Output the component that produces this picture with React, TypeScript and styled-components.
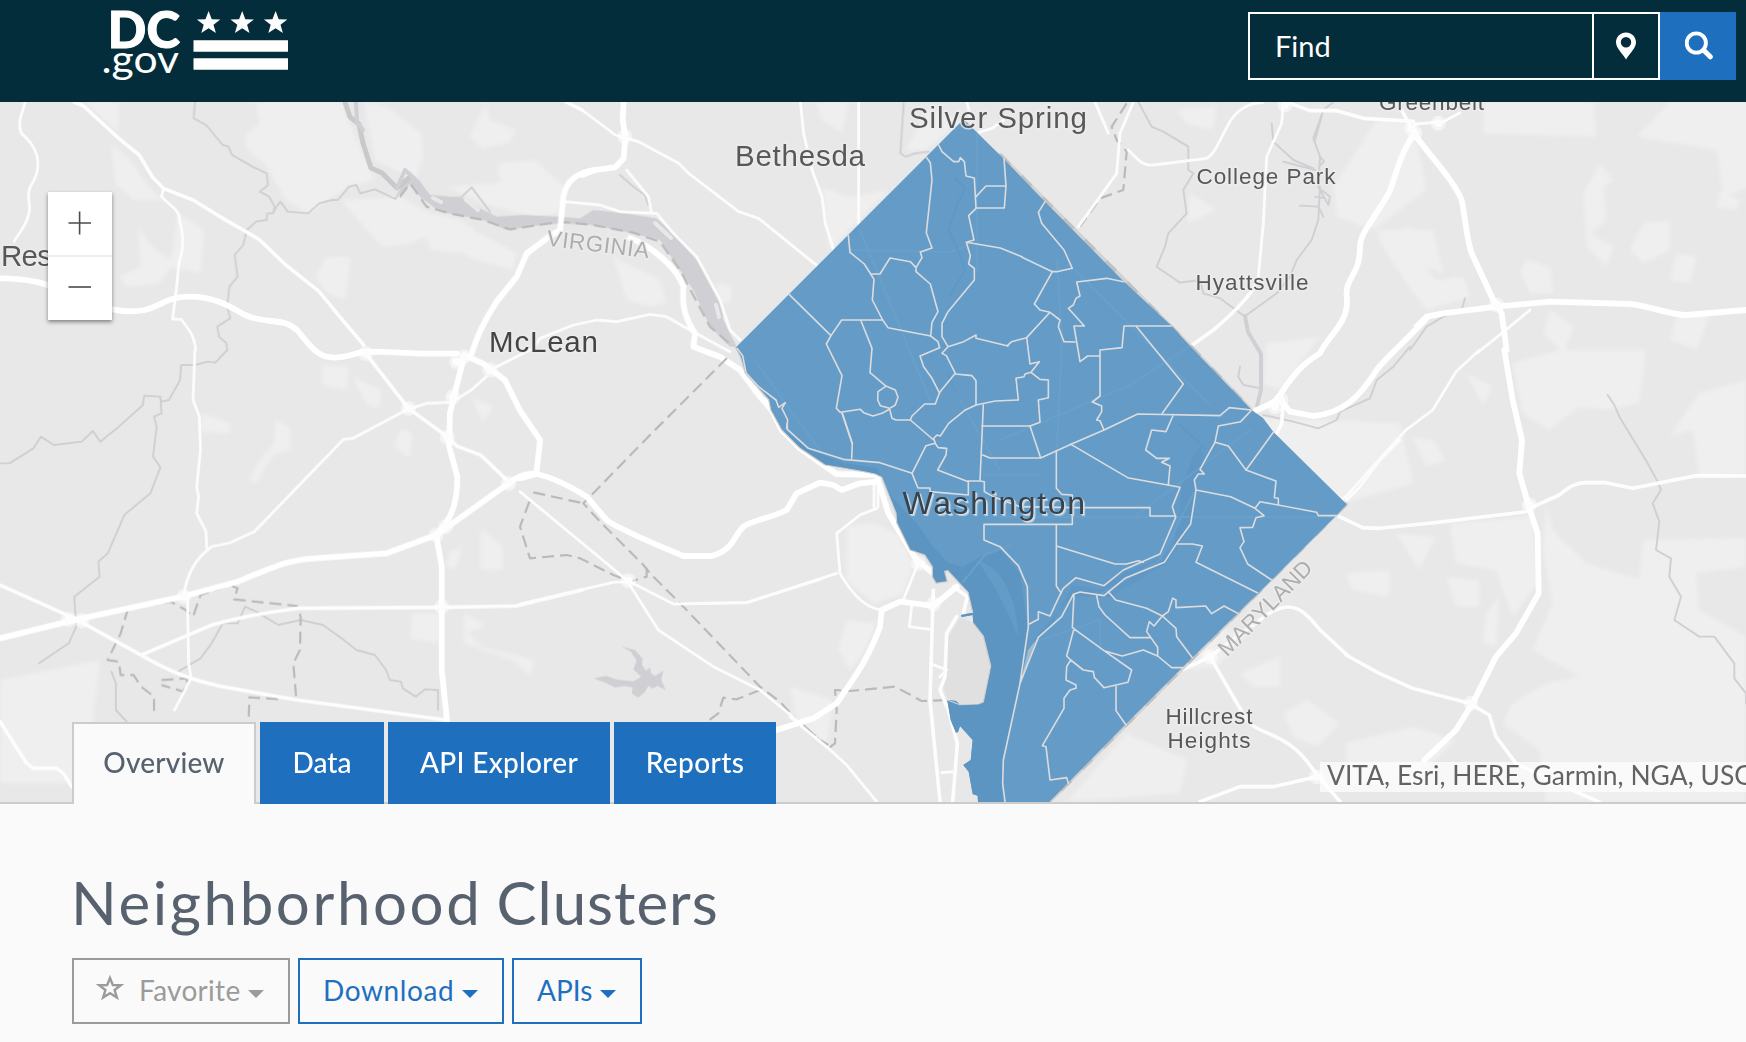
import React from "react";
import styled, { createGlobalStyle, css } from "styled-components";

const GlobalStyle = createGlobalStyle`
  *, *::before, *::after { box-sizing: border-box; }
  body {
    margin: 0;
    background: #fafafa;
    color: #58626f;
    font-family: Lato, "Open Sans", sans-serif;
    overflow: hidden;
  }
  button { font-family: inherit; }
`;

const Page = styled.div`
  display: flex;
  flex-direction: column;
  width: 100%;
  height: 1042px;
  overflow: hidden;
`;

/* ---------- header ---------- */

const Header = styled.header`
  display: flex;
  justify-content: space-between;
  flex: none;
  height: 102px;
  padding: 0 10px 0 100px;
  background: #032d3a;
`;

const Logo = styled.svg`
  display: block;
  width: 200px;
  height: 90px;
  overflow: visible;
`;

const SearchBar = styled.div`
  display: flex;
  width: 488px;
  height: 68px;
  margin-top: 12px;
`;

const SearchFields = styled.div`
  display: flex;
  flex: 1;
  border: 2px solid #fff;
`;

const SearchInput = styled.div`
  flex: 1;
  padding: 0 0 0 25px;
  color: #fff;
  font-size: 29px;
  line-height: 63px;
`;

const LocateButton = styled.button`
  display: flex;
  align-items: center;
  justify-content: center;
  width: 66px;
  padding: 0;
  border: 0;
  border-left: 2px solid #fff;
  background: transparent;
`;

const SearchButton = styled.button`
  display: flex;
  align-items: center;
  justify-content: center;
  width: 76px;
  padding: 0 0 0 2px;
  border: 0;
  background: #1e70bf;
`;

/* ---------- map ---------- */

const MapPanel = styled.section`
  position: relative;
  display: flex;
  flex-direction: column;
  justify-content: space-between;
  flex: none;
  height: 702px;
  border-bottom: 2px solid #ccc;
`;

const MapCanvas = styled.svg`
  position: absolute;
  inset: 0;
  width: 1746px;
  height: 700px;
`;

const ZoomControl = styled.div`
  position: relative;
  display: flex;
  flex-direction: column;
  width: 64px;
  margin: 90px 0 0 48px;
  background: #fff;
  box-shadow: 0 2px 4px rgba(0, 0, 0, 0.45);
`;

const ZoomButton = styled.button`
  height: 65px;
  padding: 0 1px 4px 0;
  border: 0;
  background: transparent;

  &:first-child {
    height: 63px;
    padding-bottom: 2px;
  }

  & + & { border-top: 2px solid #efefef; }

  svg { display: block; margin: 0 auto; }
`;

const Attribution = styled.div`
  position: absolute;
  top: 660px;
  left: 1320px;
  right: 0;
  height: 30px;
  padding-left: 7px;
  overflow: hidden;
  background: rgba(255, 255, 255, 0.68);
  color: #636363;
  font-size: 26.4px;
  line-height: 26px;
  letter-spacing: 0.05px;
  white-space: nowrap;
`;

const TabList = styled.nav`
  position: relative;
  display: flex;
  gap: 4px;
  height: 82px;
  margin: 0 0 -2px 72px;
`;

const Tab = styled.button<{ $width: number; $spacing: number; $active?: boolean }>`
  width: ${(p) => p.$width}px;
  padding: 0 0 2px;
  border: 0;
  background: #1e70bf;
  color: #fff;
  font-size: 28px;
  font-weight: 500;
  line-height: 80px;
  letter-spacing: ${(p) => p.$spacing}px;
  text-align: center;
  white-space: nowrap;

  ${(p) =>
    p.$active &&
    css`
      padding: 0 0 4px;
      border: 2px solid #ccc;
      border-bottom: 0;
      background: #fafafa;
      color: #58626f;
      line-height: 76px;
    `}
`;

/* ---------- dataset ---------- */

const Dataset = styled.main`
  flex: 1;
  padding: 62px 72px 0;
`;

const Title = styled.h1`
  margin: 0 0 0 -1px;
  color: #58626f;
  font-size: 60px;
  font-weight: 400;
  line-height: 72px;
  letter-spacing: 2.6px;
  word-spacing: -4px;
  white-space: nowrap;
`;

const TitleEnd = styled.span`
  letter-spacing: 1px;
`;

const Actions = styled.div`
  display: flex;
  gap: 8px;
  margin-top: 20px;
`;

const ActionButton = styled.button<{ $width: number; $muted?: boolean; $spacing: number }>`
  display: flex;
  align-items: center;
  justify-content: space-between;
  width: ${(p) => p.$width}px;
  height: 66px;
  padding: 0 24px 3px 23px;
  border: 2px solid currentColor;
  background: transparent;
  color: ${(p) => (p.$muted ? "#9b9b9b" : "#1e70bf")};
  font-size: 28px;
  letter-spacing: ${(p) => p.$spacing}px;
  white-space: nowrap;
`;

const Caret = styled.span`
  margin-top: 8px;
  border: 8px solid transparent;
  border-top-color: currentColor;
  border-bottom: 0;
`;

/* ---------- basemap data ---------- */

type Sheet = {
  transform: string;
  patches?: string;
  water?: string;
  streams?: string;
  thin?: string;
  mid?: string;
  wide?: string;
  nodes?: string;
  dashes?: string;
};

const sheets: Sheet[] = [
  {
    transform: "scale(.3712 .33333)",
    patches:
      "M230,306 L320,306 320,400 Z M690,306 L920,306 980,470 1010,540 940,560 830,640 770,600 720,500 660,440 665,400 700,370 Z M980,306 L1040,320 1135,400 1140,470 1120,540 1010,480 Z M300,430 L350,480 400,560 440,600 360,600 310,550 Z M920,600 L1080,590 1160,640 1240,660 1280,690 1280,760 1210,740 1140,710 1110,730 1030,740 980,680 Z M1310,310 L1320,360 1390,390 1370,430 1300,445 1265,410 Z M880,770 L945,770 930,900 880,880 850,830 Z M370,680 L410,740 460,780 480,640 550,690 540,820 460,800 430,850 340,860 320,830 380,800 Z M1340,490 L1440,480 1520,560 1510,640 1440,650 1330,620 1200,560 1350,550 Z",
    streams:
      "M525,306 L522,355 555,375 600,435 615,440 625,465 680,500 718,520 722,555 700,575 725,590 740,620 735,640 720,640 718,660 690,665 665,690 655,735 632,765 640,830 618,860 612,920 620,955 585,980 590,1010 610,1030 612,1050 M735,640 L745,620 755,605 775,635 830,640 860,610 895,600 910,600 940,560 960,555 970,580 1010,568 1065,597 1085,560",
    thin:
      "M68,306 C60,340 45,370 58,400 C100,440 115,490 90,545 C65,580 85,610 78,640 C70,680 50,700 38,725 M440,570 L435,590 C460,620 485,630 483,660 C500,720 490,760 482,790 L475,870 465,957 488,958 C510,990 525,1010 527,1050",
    mid:
      "M200,306 L225,318 320,415 375,465 410,530 440,565 520,600 600,655 660,693 700,720 770,795 860,875 915,950 980,1035 M1525,306 L1568,330",
    wide:
      "M0,835 C80,835 130,850 180,880 C300,935 340,940 390,930 C440,915 450,890 510,890 C580,890 620,920 660,945 C720,975 760,950 800,990 C830,1030 850,1062 880,1070 C920,1080 950,1060 985,1055 C1080,1055 1150,1065 1230,1060",
  },
  {
    transform: "translate(0 350) scale(.3712 .33333)",
    patches:
      "M0,990 L270,930 230,1300 0,1300 Z M865,45 L940,50 935,120 870,105 Z M950,80 L1030,120 1020,175 985,160 Z M540,190 L620,220 620,250 540,245 Z M740,210 L780,230 785,300 735,315 690,400 670,390 700,330 740,280 Z M1080,235 L1110,250 1105,325 1060,290 Z M1295,535 L1355,590 1355,660 1295,660 Z M1245,585 L1230,655 1200,655 1210,610 Z M1110,790 L1185,790 1185,880 1105,865 Z M1250,790 L1310,825 1260,850 1300,890 1440,930 1430,980 1380,930 1250,880 Z M1270,140 L1330,170 1300,215 Z",
    streams:
      "M0,340 L25,340 90,295 110,260 145,285 220,275 250,243 270,275 320,230 385,165 388,137 430,140 435,155 455,150 485,90 488,45 525,45 560,35 580,38 612,0 M432,140 L435,190 415,200 422,230 412,320 432,352 405,430 345,485 335,495 290,610 265,635 268,680 200,740 205,830 185,880 105,940 M480,965 L540,925 570,880 600,820 640,820 660,770 690,785 750,825 810,810 870,825 920,865 960,900 1010,915 1040,960 1050,990 1080,995 1085,1015 1120,1040 1145,1018 1180,1020 1180,1080 M300,965 L312,1000 312,1080 345,1120",
    thin:
      "M525,0 L520,150 537,200 540,300 530,410 535,440 530,490 555,545 557,595 M505,740 L508,940 515,985 470,1080 M495,740 C500,690 520,630 570,590 L620,578 685,545 925,268 950,265 1100,177 1150,160 1215,157 1270,120 1310,80",
    mid:
      "M985,10 L1100,175 1205,260 1230,288 1295,315 1370,395 M0,705 L200,805 380,915 C450,960 510,990 600,1010 L800,1050 1000,1080 1200,1110 M380,915 L570,825 C650,800 730,785 800,775 L1190,772 1390,768 1568,720",
    wide:
      "M1250,20 L1225,130 1212,190 1210,290 1232,380 C1232,440 1225,500 1175,555 L1190,650 1190,960 1205,1120 M0,865 L200,810 490,740 640,695 C760,640 780,630 850,625 L1040,610 1175,555 1370,400 C1400,375 1420,370 1445,370 M1445,370 L1455,270 1400,180 1360,90 1300,40 1250,15",
    nodes:
      "M1250,20 h.1 M1230,35 h.1 M1320,60 h.1 M1220,140 h.1 M1100,175 h.1 M1205,262 h.1 M1370,400 h.1 M1175,555 h.1 M1200,530 h.1 M1190,770 h.1 M495,740 h.1 M185,808 h.1 M220,812 h.1 M985,10 h.1",
    dashes:
      "M345,775 L460,755 500,780 520,800 540,735 620,705 640,715 630,748 800,768 810,800 808,900 790,940 798,1045 M345,775 L325,850 290,930 320,935 325,975 360,975 380,1010 415,1040 415,1100 M435,990 L505,985 495,1025 435,1005 M670,1100 L672,1042 760,1048",
  },
  {
    transform: "translate(400 170) scale(.33333)",
    patches:
      "M290,0 L460,60 450,90 340,80 Z M640,260 L780,330 800,400 750,410 680,390 Z M950,340 L995,350 990,400 950,400 Z M80,180 L240,190 350,250 340,300 230,270 190,250 90,240 Z",
    water:
      "M0,60 L30,5 60,35 90,75 150,80 180,80 230,110 290,140 370,135 480,140 540,145 580,120 680,130 770,145 830,200 890,270 930,340 965,400 970,450 1010,530 990,530 930,470 880,360 840,300 780,210 700,190 580,165 480,160 400,168 320,180 250,150 200,140 120,125 60,80 30,40 0,85 Z",
    streams: "M170,95 L215,52 270,125 M660,15 L700,50 735,75 745,105",
    thin:
      "M495,95 L600,105 660,125 770,130 820,190 890,260 960,390 990,480 1020,510 M680,0 L745,80 755,130 M270,600 L400,535 420,505 520,465 590,450 650,455 750,433 800,440 870,480 990,545",
    wide:
      "M215,550 C230,500 260,440 290,395 L350,320 380,250 440,205 480,180 490,80 C500,30 530,10 580,0 M690,205 C750,225 830,290 850,350 C845,420 860,450 885,490 L880,530 960,560 1020,600 1080,680 1115,720",
    dashes: "M0,80 L30,40 80,110 150,130 250,150 330,178 480,155 580,165 700,188 780,215 840,300 930,470 1000,530",
  },
  {
    transform: "translate(582 90) scale(.33333)",
    patches:
      "M700,36 L800,36 780,130 720,90 Z M1040,60 L1140,90 1030,180 970,180 Z M720,290 L800,320 920,300 740,480 Z",
    streams: "M965,40 L955,190 970,200 1000,190 1040,185",
    thin:
      "M0,60 L100,135 170,155 290,220 320,250 470,365 530,385 690,515 710,530 M655,36 L665,130 690,240 720,320 730,400 755,480 M830,36 L830,400 M1180,130 L1230,115 1265,90 M1155,36 L1165,80",
    wide: "M0,255 L40,240 100,232 125,205 130,140 122,90 125,36",
    nodes: "M128,140 h.1",
  },
  {
    transform: "translate(520 430) scale(.33333)",
    water:
      "M305,650 L345,660 368,686 366,705 378,722 390,712 393,730 405,738 430,722 424,750 437,780 412,768 398,776 385,768 375,785 355,803 335,790 338,772 312,768 285,772 262,760 222,745 258,738 290,748 340,754 364,740 340,718 350,692 332,664 Z",
    thin: "M0,185 L320,450 415,600 580,710 720,780 830,870 M0,522 L280,457 330,455 460,522 680,518 900,448",
    wide:
      "M0,145 L50,132 C110,145 160,175 200,200 L260,270 C300,300 400,340 490,378 L575,378 C640,360 640,320 670,290 C700,270 750,265 800,240 L830,190 900,158",
    nodes: "M325,452 h.1",
    dashes:
      "M621,-216 L395,10 190,220 240,275 370,405 395,435 490,530 720,770 780,815 830,870 900,930 925,945 M40,187 L190,220 M28,215 L0,290 30,385 140,375 180,385 280,435 330,455 380,440 380,405 M720,780 L650,808 610,803 595,850 555,880",
  },
  {
    transform: "translate(700 400) scale(.33333)",
    patches:
      "M440,380 L520,368 590,400 640,490 610,580 520,610 440,540 Z M440,660 L530,670 490,760 450,810 415,750 Z M270,860 L400,900 380,1040 290,960 Z",
    thin:
      "M530,325 L480,345 410,400 420,520 C460,590 500,625 545,630 M650,500 L610,600 M690,790 L740,810 720,830 M635,620 L628,680 690,688 M725,1118 L765,1115 M522,250 L522,320 M534,250 L534,320 M0,610 L140,608 410,520 M270,950 L385,1045 440,1095 530,1205",
    mid:
      "M700,570 L690,900 720,1205 M770,650 L740,700 735,830 720,870 745,930 772,1030 765,1120 758,1205 M760,560 L802,590 790,640",
    wide:
      "M200,0 L245,90 300,145 370,195 410,222 530,225 565,340 650,480 700,520 M360,248 L400,255 425,270 480,250 530,245 M545,630 L600,605 700,618 770,560 M545,630 L540,680 C500,790 450,850 410,910 L340,955 230,990 130,1010",
    nodes: "M655,490 h.1 M700,612 h.1",
    dashes: "M310,975 L385,1045 405,1030 410,930 405,870 450,873 585,860 665,903 740,900",
  },
  {
    transform: "translate(1000 90) scale(.33333)",
    patches:
      "M530,60 L650,50 640,120 560,100 Z M1130,90 L1240,100 1280,300 1120,420 1010,380 1000,290 Z M570,310 L650,360 560,400 Z M800,760 L960,740 900,820 840,900 790,880 Z M1130,420 L1300,420 1330,550 1200,500 Z M760,980 L1200,1000 1240,1180 1030,1240 850,1080 Z",
    streams:
      "M415,36 L455,110 490,125 565,170 565,240 580,250 550,300 560,370 505,430 495,470 470,530 540,578 600,570 610,610 660,625 735,680 M720,830 L715,860 730,885 785,895 M965,75 L940,145 960,200 955,290 985,345 M960,290 L955,390 935,450 890,510 870,560 830,610 740,675 M815,100 L820,155 880,210 940,235 M850,215 L945,240 M900,347 L955,350 970,380 M960,200 L972,215 962,225 M965,300 L990,320 985,345 M945,320 L975,325 M790,975 L880,995 955,1015 1010,990 1020,965 1110,925 1130,870 1180,830 1230,770",
    thin:
      "M285,36 L325,130 M400,36 L360,130 350,250 300,320 235,410 M385,180 C420,215 430,228 460,225 L620,205 C650,190 670,120 700,80 C730,45 760,40 790,36 M850,36 L845,100 800,200 790,400 775,560",
    mid: "M775,560 C770,600 700,670 640,720 L570,770 M870,40 L930,62 1010,62 1090,85 1240,94 M850,930 L845,1000 830,1030",
    wide:
      "M1245,130 C1190,200 1180,300 1160,320 C1120,390 1080,430 1080,470 C1080,560 1035,560 1040,620 C1050,700 980,740 960,790 C910,820 880,850 830,930 C800,950 780,955 760,965 M840,930 L870,965 940,978 C1030,970 1080,920 1130,840 C1160,800 1210,760 1280,685",
    nodes: "M843,930 h.1 M855,45 h.1 M825,950 h.1",
    dashes: "M380,40 L335,110 350,150 380,185 370,300 300,325 240,410",
  },
  {
    transform: "translate(1230 0) scale(.33333)",
    patches:
      "M760,306 L1090,306 1100,410 920,405 760,400 Z M1320,306 L1560,306 1560,560 1480,590 1460,450 1220,410 Z M1110,490 L1150,540 1120,560 1130,660 1080,700 1150,740 1130,800 1070,740 1060,580 Z M1240,670 L1320,660 1320,750 1240,790 1200,750 Z M890,780 L960,800 970,880 900,880 870,810 Z M440,710 L540,680 580,720 580,800 620,840 700,830 720,890 590,930 530,850 Z M1340,760 L1400,770 1380,850 1320,840 Z M1340,950 L1440,940 1400,1050 1320,1020 Z M960,930 L1030,980 1000,1060 940,1000 Z M1470,570 L1530,600 1520,630 1460,620 Z",
    streams: "M705,895 L695,930 640,950 590,980 540,1050 M310,306 L280,330 255,420",
    thin: "M900,930 L815,1000 740,1060 M690,338 L640,365 555,372",
    mid: "M515,330 L555,405",
    wide:
      "M555,405 C610,480 670,540 695,600 C710,680 710,720 725,760 L790,900 815,940 830,1050 M560,980 L590,950 640,940 800,920 960,905 1200,912 C1270,920 1320,945 1370,945 L1548,930",
    nodes: "M555,400 h.1 M545,385 h.1 M800,915 h.1 M625,370 h.1",
  },
  {
    transform: "translate(1346 350) scale(.33333)",
    patches:
      "M500,40 L640,0 900,0 880,160 780,180 700,170 610,240 530,190 Z M1060,130 L1200,90 1200,380 1060,380 1040,240 970,260 Z M600,460 L620,540 720,640 890,690 780,740 620,760 590,600 Z M310,520 L560,500 575,700 500,800 450,660 330,640 Z M890,570 L1200,565 1200,650 1050,670 1060,780 1200,860 1200,1356 600,1356 580,1200 470,1120 500,1060 600,1000 700,980 560,900 620,760 880,690 Z M150,550 L270,560 220,660 Z M300,680 L400,690 400,770 330,770 Z M0,670 L130,660 130,740 20,720 Z M0,210 L90,220 130,280 60,370 0,390 Z M360,70 L440,110 410,165 Z M200,260 L260,270 300,330 240,350 Z M0,1180 L200,1130 330,1170 200,1300 0,1300 Z M420,790 L460,740 450,890 410,880 Z",
    streams:
      "M785,135 L805,165 820,200 905,340 935,395 945,420 920,460 940,515 930,600 975,625 970,680 1005,740 985,810 1060,860 1105,860 1165,940 1165,985 1200,1030 1200,1060",
    thin: "M400,0 L330,65 260,180 180,240 80,350 0,440 -30,458",
    mid:
      "M-20,500 L50,533 100,535 250,520 540,485 M550,475 L640,435 C670,410 690,398 720,398 L780,398 860,415 1050,377 1200,378 M0,915 L100,970 200,1015 370,1060 430,1095 450,1160 510,1240 700,1330 760,1356",
    wide: "M475,0 L500,150 528,270 520,370 550,475 575,550 578,730 510,850 450,920 380,1060 330,1140 235,1230",
    nodes: "M550,465 h.1 M375,1060 h.1",
  },
  {
    transform: "translate(1000 400) scale(.33333)",
    patches:
      "M380,1000 L560,1080 540,1180 200,1205 Z M850,940 L920,900 1020,970 950,1040 880,1010 Z M720,820 L840,770 840,860 760,860 Z M620,680 L740,700 650,800 560,810 Z",
    thin: "M1040,300 L1080,260 1140,180 1200,120",
    mid: "M550,808 L630,770 800,645 C880,590 920,640 960,690 L1045,768 M630,770 L740,960 C780,1010 860,990 940,1110 L1020,1205 M600,1205 L720,1160 820,1160 950,1130",
    nodes: "M950,1130 h.1 M630,770 h.1",
  },
  {
    transform: "translate(0 690) scale(.33333)",
    mid: "M0,95 L80,220 100,235 170,235 190,250 215,290 240,300",
  },
];

const districtOutline =
  "M963.7,119.3 L1000,155 1045,201.7 1123,280.7 1171.7,326 1190,346 1251.7,410 1263,418 1273.5,432 1346.7,504.3 1336.7,515 1271.7,580 1191.7,658.3 1125,725 1049.3,802 978,802 977.7,795.7 972.7,794 968.7,771.7 963.3,765 970.7,760 972.7,740 960,726 958,732 956,732.7 950.7,720 947.3,700 956,701 960,704.7 978.3,704 983.3,702 987.3,683.3 990.7,666 983.3,636 973.3,623.3 972.7,615 961.7,617 961,615 972.7,612.7 968,592.3 947.7,570.7 944.7,571.3 947.3,581.7 936,583.3 932.3,576.7 932.3,566.7 924.7,555 910,550 896.7,522.7 896,513.3 881.7,477.3 875,474 860,471 825,465 800,448.3 781.7,430 770.7,410 768.7,400 745.3,373.3 740.3,356.7 735.5,347.7 Z";

const clusterLines: { transform: string; d: string }[] = [
  {
    transform: "translate(582 90) scale(.33333)",
    d: "M1070,165 L1080,185 1115,215 1130,215 1135,203 1147,215 1152,258 1177,264 1182,355 1160,377 1176,450 1153,457 1165,497 1160,522 1177,535 1177,570 1098,665 1080,700 1080,740 1098,770 1080,790 1093,797 1120,850 1073,907 1060,942 1028,942 990,978 985,990 1055,1050 M1266,205 L1272,287 1267,354 1182,354 M1182,320 L1212,288 1272,288 M1033,202 L1045,218 1050,270 1033,428 1050,474 1015,486 1020,503 1002,533 1002,545 1045,582 1068,665 1050,697 1046,738 1068,755 1073,773 1014,798 1025,830 1050,865 1073,910 M799,436 L804,487 847,522 866,552 894,552 924,504 985,515 1002,533 M866,552 L876,568 871,630 902,690 918,713 1046,738 M902,690 L779,690 747,737 622,614 M747,737 L733,762 780,857 763,955 775,967 835,958 845,968 873,978 900,970 923,957 930,985 942,990 985,990 M836,690 L870,775 864,848 910,887 940,900 948,922 940,945 923,955 895,947 887,930 888,905 910,890 M780,970 L810,1060 M1153,457 L1255,474 1320,500 M1098,770 L1145,755 1182,735 1182,745 1278,768 M1120,852 L1170,857 1182,872 1182,945 1150,960 1100,1000 1075,1038 1065,1035 1055,1045 1060,1060 M1182,945 L1240,933 1308,930 M1200,1008 L1345,1008 M465,775 L482,797 492,848 530,890 582,930 590,952 610,938 600,955 617,990 614,1015",
  },
  {
    transform: "translate(1000 90) scale(.33333)",
    d: "M66,502 L157,545 103,642 120,660 150,667 180,690 175,710 192,755 225,756 M150,667 L80,743 90,822 118,815 93,847 120,868 145,870 145,923 115,930 120,997 90,1008 M80,743 L35,755 22,767 M93,847 L75,852 72,860 48,865 55,930 M135,335 L115,367 125,400 192,480 217,535 170,545 157,545 M370,575 L320,565 230,576 240,618 228,625 220,645 205,655 253,708 222,708 240,815 263,798 300,798 M515,708 L372,708 366,773 300,780 300,918 277,936 305,948 305,965 290,990 300,992 312,1020 M408,708 L550,882 487,970 M213,1063 L312,1020 413,972 660,977 688,953 755,960 722,995 655,1008 645,1057 M520,975 L498,1025 455,1020 437,1080 470,1105 M820,1027 L738,1140",
  },
  {
    transform: "translate(700 400) scale(.33333)",
    d: "M850,15 L840,243 805,243 805,285 690,275 690,264 654,264 636,220 678,137 705,130 715,143 740,145 738,165 713,210 805,245 M840,243 L853,245 853,275 880,290 960,320 1117,323 M636,220 L540,188 430,178 325,145 262,88 262,70 M455,175 L457,130 427,40 M848,165 L870,174 1022,174 1113,133 M990,78 L1022,174",
  },
  {
    transform: "translate(1000 400) scale(.33333)",
    d: "M470,175 L508,175 485,187 510,198 505,255 M213,133 L383,233 540,262 517,320 527,352 480,462 370,510 312,557 228,533 190,565 182,580 150,648 115,635 115,658 88,672 M217,323 L450,323 450,348 527,348 M-48,373 L217,373 217,285 185,283 169,265 169,155 M169,373 L169,558 184,580 M169,438 L345,492 380,492 415,482 430,487 M-48,373 L-48,420 0,440 55,497 82,560 85,680 60,850 10,1080 8,1150 15,1205 M645,127 L600,208 613,222 595,222 583,240 588,270 572,372 530,430 493,487 375,535 312,587 240,576 220,583 185,650 115,712 60,850 M645,127 L685,138 738,210 828,243 823,293 835,295 835,313 M588,270 L692,290 765,325 792,347 768,353 758,382 720,383 732,425 720,443 743,492 815,540 M765,325 L780,305 950,337 955,347 1010,347 M530,432 L578,432 607,438 588,487 772,578 M325,575 L347,600 440,625 487,648 505,635 518,595 528,600 528,623 617,618 635,641 672,618 715,641 M290,587 L297,620 315,645 390,713 450,713 M487,648 L462,678 448,665 440,695 473,742 473,768 515,803 550,803 M487,648 L528,685 530,710 577,773 M222,583 L217,683 312,752 395,810 384,847 312,863 283,832 280,815 250,810 212,780 200,768 222,685 M312,752 L367,768 430,750 473,768 M212,780 L200,800 198,840 228,855 228,865 210,870 192,895 192,925 127,1037 138,1040 150,1140 200,1133 205,1150 M348,860 L348,932 378,975",
  },
];

type Place = {
  text: string;
  x: number;
  y: number;
  width: number;
  size: number;
  color?: string;
  rotate?: number;
};

const places: Place[] = [
  { text: "Silver Spring", x: 909, y: 127.5, width: 178, size: 29.5 },
  { text: "Bethesda", x: 735, y: 165.5, width: 130, size: 29.5 },
  { text: "McLean", x: 489, y: 351.5, width: 109, size: 29.5, color: "#444" },
  { text: "Res", x: 1, y: 265.5, width: 51, size: 29.5 },
  { text: "Greenbelt", x: 1379, y: 110, width: 105, size: 22.5 },
  { text: "College Park", x: 1196.5, y: 183.5, width: 139, size: 22.5 },
  { text: "Hyattsville", x: 1195.5, y: 289.5, width: 113, size: 22.5 },
  { text: "Hillcrest", x: 1165.5, y: 723.5, width: 87, size: 22.5 },
  { text: "Heights", x: 1167.5, y: 747.5, width: 83, size: 22.5 },
  { text: "VIRGINIA", x: 546, y: 245.5, width: 103, size: 22.5, color: "#adadad", rotate: 7 },
  { text: "MARYLAND", x: 1227, y: 657.5, width: 124, size: 22.5, color: "#adadad", rotate: -45.5 },
];

const Line = styled.path<{ $stroke: string; $weight: number; $dash?: string }>`
  fill: none;
  stroke: ${(p) => p.$stroke};
  stroke-width: ${(p) => p.$weight}px;
  stroke-dasharray: ${(p) => p.$dash ?? "none"};
  stroke-linecap: ${(p) => (p.$dash ? "butt" : "round")};
  stroke-linejoin: round;
  vector-effect: non-scaling-stroke;
`;

const PlaceLabel = styled.text<{ $size: number; $color: string }>`
  fill: ${(p) => p.$color};
  font-family: "Liberation Sans", Arial, sans-serif;
  font-size: ${(p) => p.$size}px;
  paint-order: stroke;
  stroke: rgba(238, 238, 238, 0.75);
  stroke-width: 3px;
  stroke-linejoin: round;
`;

const CityLabel = styled.text`
  fill: #36424d;
  font-family: "Liberation Sans", Arial, sans-serif;
  font-size: 32px;
  text-shadow: 1px 1px 1px #d9e2ea, 2px 2px 1px #c3d3e1;
`;

function DistrictMap() {
  return (
    <MapCanvas viewBox="0 102 1746 700" role="img" aria-label="Map of neighborhood clusters">
      <defs>
        <clipPath id="district">
          <path d={districtOutline} />
        </clipPath>
        <filter id="soften" x="-5%" y="-5%" width="110%" height="110%">
          <feGaussianBlur stdDeviation="2" />
        </filter>
        <filter id="blend" filterUnits="userSpaceOnUse" x="0" y="102" width="1746" height="700">
          <feGaussianBlur stdDeviation="0.5" />
        </filter>
      </defs>
      <rect y="102" width="1746" height="700" fill="#e8e8e8" />
      <g filter="url(#soften)">
        {sheets.map((s, i) => s.patches && <path key={i} transform={s.transform} d={s.patches} fill="#efefef" />)}
      </g>
      <g filter="url(#blend)">
        <path d="M960,617 L973,623 983,636 991,666 983,702 960,705 947,698 942,683 947,640 Z" fill="#e0e0e0" />
        {sheets.map((s, i) => (
          <g key={i} transform={s.transform}>
            {s.streams && <Line d={s.streams} $stroke="#cfcfd4" $weight={1.9} />}
            {s.water && <path d={s.water} fill="#cfcfd4" />}
          </g>
        ))}
        <Line d="M345,102 L350,117 359,124 363,143 371,168 382,173 397,188 409,178" $stroke="#c9c9cc" $weight={5} />
        <Line d="M356,102 L357,122 363,130 M397,188 L405,170 418,182 426,196" $stroke="#cfcfd4" $weight={4} />
        <Line d="M1245,316 L1248,332 1261,354 1261,390 1257,406" $stroke="#d0d0d4" $weight={4} />
        <Line d="M433,198 L441,202 M466,200 L478,210 M655,223 L671,238 M716,305 L719,317" $stroke="#e8e8e8" $weight={4} />
        {sheets.map((s, i) => (
          <g key={i} transform={s.transform}>
            {s.dashes && <Line d={s.dashes} $stroke="#bababa" $weight={2.2} $dash="12 6" />}
            {s.thin && <Line d={s.thin} $stroke="#fcfcfc" $weight={2.8} />}
            {s.mid && <Line d={s.mid} $stroke="#fdfdfd" $weight={3.6} />}
            {s.wide && <Line d={s.wide} $stroke="#fff" $weight={5.8} />}
            {s.nodes && <Line d={s.nodes} $stroke="rgba(255,255,255,0.5)" $weight={15} />}
            {s.nodes && <Line d={s.nodes} $stroke="#fdfdfd" $weight={8} />}
          </g>
        ))}
        <Line d="M1000,155 L1190,346 1251,410 M1346,504 L1049,802" $stroke="#d2d2d2" $weight={4} />
        <Line d="M1000,155 L1190,346 1251,410 M1346,504 L1049,802" $stroke="#c0c0c0" $weight={4} $dash="14 16" />
      </g>

      <path d={districtOutline} fill="#649cc7" />
      <g clipPath="url(#district)">
        <g filter="url(#blend)">
          <path
            transform="translate(700 400) scale(.33333)"
            d="M90,-80 L190,0 250,90 330,150 430,188 530,205 575,290 650,370 700,440 745,490 790,500 860,460 900,445 960,520 983,680 955,870 910,1080 905,1170 915,1250 700,1250 600,500 0,0 Z"
            fill="#5c95c2"
          />
          <path
            transform="translate(700 400) scale(.33333)"
            d="M830,480 C900,500 950,580 955,712 C930,650 890,560 830,480 Z M740,400 L790,390 800,450 760,430 Z"
            fill="#649cc7"
          />
          <path
            transform="translate(1000 400) scale(.33333)"
            d="M605,135 L580,170 545,260 540,330 520,440 480,475 370,520 300,570 220,555 150,680 90,740 70,830 100,720 215,590 330,590 500,490 575,370 585,250 610,190 Z"
            fill="#6097c4"
          />
        </g>
        <Line
          d="M977,119 L977,270 M850,250 L950,252 970,245 M860,230 L930,400 M1057,260 L1062,340 1057,450 M1000,440 L1130,385 1190,346 M960,400 L1000,470 M1075,270 L1210,405 M983,475 L1040,475 M1000,517 L1346,517 M1130,520 L1250,430 M1090,600 L1160,560 1200,480 M963,582 L985,555 1010,545 M1040,640 L1100,620 1100,650 M755,360 L790,410 820,450"
          $stroke="#69a0ca"
          $weight={2}
        />
        <Line d="M955,178 L965,188 957,205 948,230 956,245 965,270 950,295 M948,375 L955,390 M1180,425 L1205,448" $stroke="#5f98c4" $weight={2} />
      </g>
      {clusterLines.map((c, i) => (
        <g key={i} transform={c.transform}>
          <Line d={c.d} $stroke="#dcdcde" $weight={1.6} />
        </g>
      ))}
      <path d="M1028,650 L1036,640 1019,688 Z" fill="#dcdcde" opacity="0.5" />
      <Line
        d="M735.5,347.7 L740.3,356.7 745.3,373.3 768.7,400 770.7,410 781.7,430 800,448.3 825,465 860,471 875,474 881.7,477.3 896,513.3 896.7,522.7 910,550 924.7,555 932.3,566.7 932.3,576.7 936,583.3 947.3,581.7 944.7,571.3 947.7,570.7 968,592.3 972.7,612.7 M973.3,623.3 L983.3,636 990.7,666 983.3,702 978.3,704 960,704.7 947.3,700"
        $stroke="#d0d0d0"
        $weight={1.2}
      />

      {places.map((p) => (
        <PlaceLabel
          key={p.text}
          x={p.x}
          y={p.y}
          textLength={p.width}
          transform={p.rotate ? `rotate(${p.rotate} ${p.x} ${p.y})` : undefined}
          $size={p.size}
          $color={p.color ?? "#585858"}
        >
          {p.text}
        </PlaceLabel>
      ))}
      <CityLabel x="902.5" y="513.5" textLength="182.5">
        Washington
      </CityLabel>
    </MapCanvas>
  );
}

/* ---------- icons ---------- */

const starPath = "M0,-12.2 L3.1,-4 11.7,-3.7 4.9,1.6 7.3,9.9 0,5.1 -7.3,9.9 -4.9,1.6 -11.7,-3.7 -3.1,-4 Z";

function DcLogo() {
  return (
    <Logo viewBox="100 0 200 90" role="img" aria-label="DC.gov">
      <g fill="#fff">
        <text
          x="107.8"
          y="48"
          fontFamily="Lato, sans-serif"
          fontWeight="900"
          fontSize="51.5"
          textLength="72"
          lengthAdjust="spacingAndGlyphs"
          stroke="#fff"
          strokeWidth="1"
        >
          DC
        </text>
        <text
          x="101.5"
          y="72.6"
          fontFamily="Lato, sans-serif"
          fontSize="38.5"
          textLength="77.5"
          lengthAdjust="spacingAndGlyphs"
        >
          .gov
        </text>
        <path transform="translate(208.6 23.2)" d={starPath} />
        <path transform="translate(242.2 23.2)" d={starPath} />
        <path transform="translate(275.6 23.2)" d={starPath} />
        <path d="M193.5,40.2 h94.5 v11.6 h-94.5 Z M193.5,58.2 h94.5 v11.6 h-94.5 Z" />
      </g>
    </Logo>
  );
}

const PinIcon = () => (
  <svg width="20" height="28" viewBox="0 0 20 28">
    <path
      fill="#fff"
      fillRule="evenodd"
      d="M10,0.5 C4.5,0.5 0,4.8 0,10.3 C0,16 6,21 10,27.5 C14,21 20,16 20,10.3 C20,4.8 15.5,0.5 10,0.5 Z M10,5 a5.2,5.2 0 1 1 0,10.4 a5.2,5.2 0 1 1 0,-10.4 Z"
    />
  </svg>
);

const SearchIcon = () => (
  <svg width="28" height="30" viewBox="1 1 28 30" fill="none" stroke="#fff" strokeLinecap="round">
    <circle cx="12.3" cy="13" r="9.6" strokeWidth="3.9" />
    <path d="M20,20.5 L26.3,26.8" strokeWidth="5" />
  </svg>
);

const StarIcon = () => (
  <svg width="28" height="27" viewBox="0 0 28 27" fill="none" stroke="currentColor" strokeWidth="2.4">
    <path d="M14,4 L16.8,11 L24.8,11.2 L18.6,16 L20.9,23.6 L14,19.2 L7.1,23.6 L9.4,16 L3.2,11.2 L11.2,11 Z" />
  </svg>
);

const ZoomIcon = ({ plus }: { plus?: boolean }) => (
  <svg width="24" height="24" viewBox="0 0 24 24" stroke="#4c4c4c" strokeWidth="1.6">
    <path d={plus ? "M0.5,12 H23 M11.6,0.5 V23.5" : "M0.5,12 H23"} />
  </svg>
);

const FavoriteLabel = styled.span`
  display: flex;
  align-items: center;
  gap: 15px;

  svg { margin: -5px 0 0 -1px; }
`;

export default function App() {
  return (
    <Page>
      <GlobalStyle />
      <Header>
        <DcLogo />
        <SearchBar>
          <SearchFields>
            <SearchInput>Find</SearchInput>
            <LocateButton aria-label="Near me">
              <PinIcon />
            </LocateButton>
          </SearchFields>
          <SearchButton aria-label="Search">
            <SearchIcon />
          </SearchButton>
        </SearchBar>
      </Header>

      <MapPanel>
        <DistrictMap />
        <ZoomControl>
          <ZoomButton aria-label="Zoom in">
            <ZoomIcon plus />
          </ZoomButton>
          <ZoomButton aria-label="Zoom out">
            <ZoomIcon />
          </ZoomButton>
        </ZoomControl>
        <Attribution>VITA, Esri, HERE, Garmin, NGA, USGS</Attribution>
        <TabList>
          <Tab $active $width={184} $spacing={0.2}>Overview</Tab>
          <Tab $width={124} $spacing={0}>Data</Tab>
          <Tab $width={222} $spacing={0.3}>API Explorer</Tab>
          <Tab $width={162} $spacing={0.4}>Reports</Tab>
        </TabList>
      </MapPanel>

      <Dataset>
        <Title>
          Neighborhood <TitleEnd>Clusters</TitleEnd>
        </Title>
        <Actions>
          <ActionButton $muted $width={218} $spacing={0.3}>
            <FavoriteLabel>
              <StarIcon />
              Favorite
            </FavoriteLabel>
            <Caret />
          </ActionButton>
          <ActionButton $width={206} $spacing={0.6}>
            Download
            <Caret />
          </ActionButton>
          <ActionButton $width={130} $spacing={0}>
            APIs
            <Caret />
          </ActionButton>
        </Actions>
      </Dataset>
    </Page>
  );
}
